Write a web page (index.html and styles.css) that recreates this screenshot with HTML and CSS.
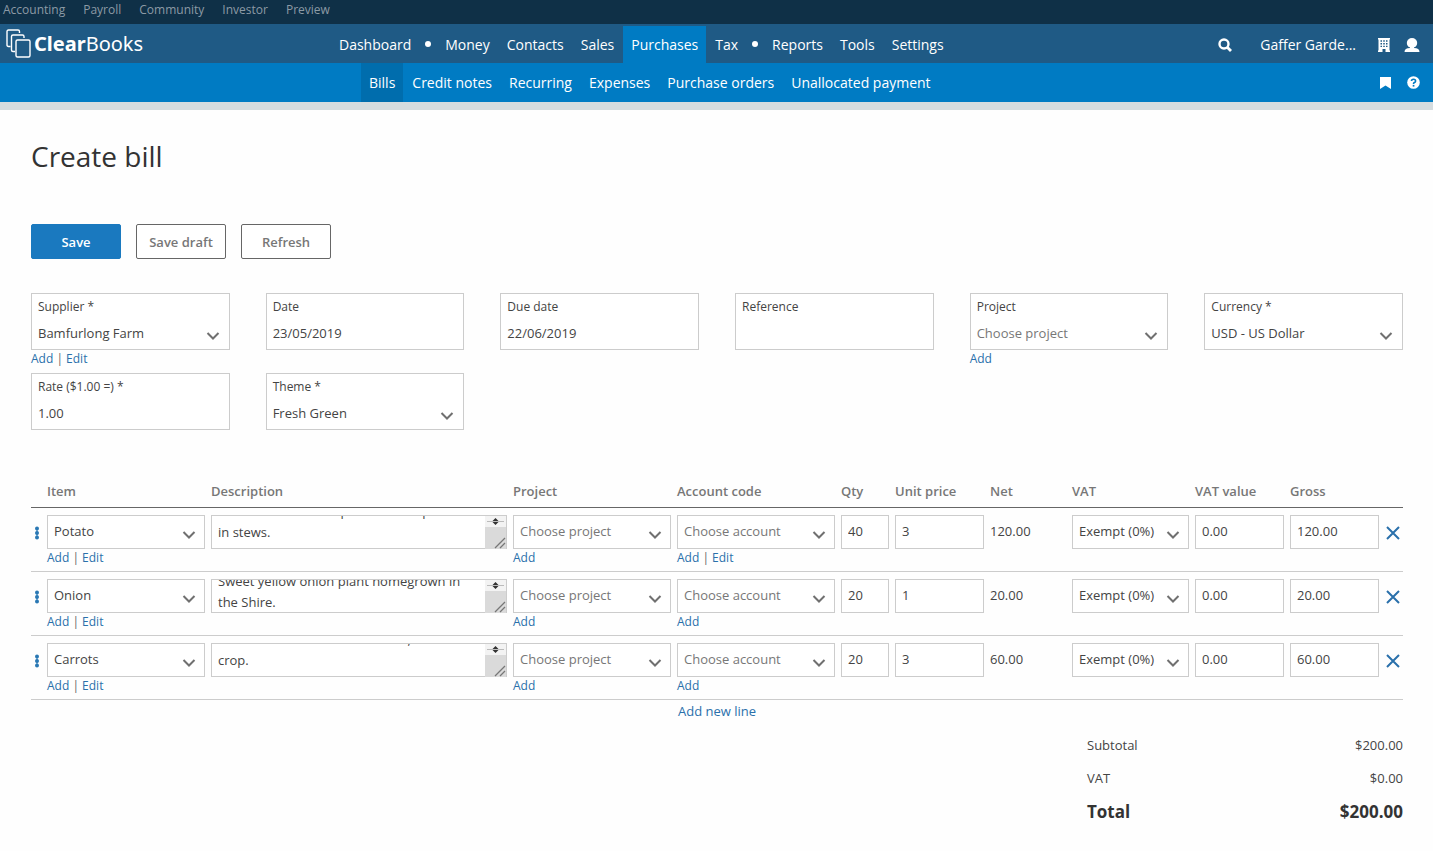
FILE: index.html
```html
<!doctype html>
<html lang="en">
  <head>
    <meta charset="UTF-8" />
    <meta name="viewport" content="width=device-width, initial-scale=1.0" />
    <title>Create bill</title>
    <link rel="stylesheet" href="styles.css">
  </head>
  <body>
    <svg class="sprite" width="0" height="0" aria-hidden="true">
      <symbol id="chevron" viewBox="0 0 14 10">
        <path d="M1.5 2 L7 7.5 L12.5 2" fill="none" stroke="#707070" stroke-width="2" />
      </symbol>
      <symbol id="cross" viewBox="0 0 14 14">
        <path d="M1 1 L13 13 M13 1 L1 13" fill="none" stroke="#2a70ab" stroke-width="2" />
      </symbol>
      <symbol id="handle" viewBox="0 0 6 14">
        <path d="M3 1 V13" stroke="#8db9d8" stroke-width="2" />
        <circle cx="3" cy="2.4" r="2" fill="#2a78b4" />
        <circle cx="3" cy="7" r="2" fill="#2a78b4" />
        <circle cx="3" cy="11.6" r="2" fill="#2a78b4" />
      </symbol>
      <symbol id="grip" viewBox="0 0 21 33">
        <rect width="21" height="33" fill="#fff" />
        <rect width="21" height="11" fill="#f3f3f3" />
        <rect y="11" width="21" height="22" fill="#dadada" />
        <path d="M2 5.500 H19" stroke="#bbb" />
        <path d="M7.500 5 L10.500 2 L13.500 5 Z M7.500 6 L10.500 9 L13.500 6 Z" fill="#333" />
        <path d="M10 32 L20 22 M15 32 L20 27" stroke="#777" stroke-width="1.300" />
      </symbol>
    </svg>

    <nav class="top-bar">
      <a href="#">Accounting</a>
      <a href="#">Payroll</a>
      <a href="#">Community</a>
      <a href="#">Investor</a>
      <a href="#">Preview</a>
    </nav>

    <header class="main-bar">
      <a class="brand" href="#">
        <svg width="25" height="29" viewBox="0 0 25 29" fill="none" stroke="#fff" stroke-width="1.4">
          <path d="M4.500 17.500 H2.500 Q1 17.500 1 16 V2.500 Q1 1 2.500 1 H12 Q13.500 1 13.500 2.500 V4" />
          <path d="M9 22.500 H7 Q5.500 22.500 5.500 21 V7.500 Q5.500 6 7 6 H16.500 Q18 6 18 7.500 V9" />
          <rect x="10" y="11" width="14" height="17" rx="1.500" />
        </svg>
        <span class="brand-name"><b>Clear</b>Books</span>
      </a>
      <nav class="main-nav">
        <a href="#">Dashboard</a>
        <span class="dot"></span>
        <a href="#">Money</a>
        <a href="#">Contacts</a>
        <a href="#">Sales</a>
        <a href="#" class="active">Purchases</a>
        <a href="#">Tax</a>
        <span class="dot"></span>
        <a href="#">Reports</a>
        <a href="#">Tools</a>
        <a href="#">Settings</a>
      </nav>
      <div class="account">
        <a class="search" href="#" aria-label="Search">
          <svg width="14" height="14" viewBox="0 0 14 14" fill="none" stroke="#fff" stroke-width="2.400">
            <circle cx="6" cy="6" r="4.500" />
            <path d="M9 9 L13 13" stroke-width="2.800" />
          </svg>
        </a>
        <a class="company" href="#">Gaffer Garde...</a>
        <a href="#" aria-label="Company">
          <svg width="12" height="14" viewBox="0 0 12 14">
            <path d="M0 0 H12 V1.500 H11.500 V12.500 H12 V14 H7.500 V11 H4.500 V14 H0 V12.500 H.5 V1.500 H0 Z" fill="#fff" />
            <path d="M2.500 3 H4 M5.250 3 H6.750 M8 3 H9.500 M2.500 5.700 H4 M5.250 5.700 H6.750 M8 5.700 H9.500 M2.500 8.400 H4 M5.250 8.400 H6.750 M8 8.400 H9.500" stroke="#1f5a85" stroke-width="1.400" />
          </svg>
        </a>
        <a class="user" href="#" aria-label="User">
          <svg width="16" height="14" viewBox="0 0 16 14" fill="#fff">
            <ellipse cx="8" cy="5" rx="5.200" ry="5" />
            <path d="M6 8 H10 V10 Q15.500 10 15.500 14 H.5 Q.5 10 6 10 Z" />
          </svg>
        </a>
      </div>
    </header>

    <div class="sub-bar">
      <nav class="sub-nav">
        <a href="#" class="active">Bills</a>
        <a href="#">Credit notes</a>
        <a href="#">Recurring</a>
        <a href="#">Expenses</a>
        <a href="#">Purchase orders</a>
        <a href="#">Unallocated payment</a>
      </nav>
      <div class="sub-tools">
        <a href="#" aria-label="Bookmark">
          <svg width="11" height="12" viewBox="0 0 11 12"><path d="M0 0 H11 V12 L5.500 8.500 L0 12 Z" fill="#fff" /></svg>
        </a>
        <a href="#" aria-label="Help">
          <svg width="13" height="13" viewBox="0 0 13 13">
            <circle cx="6.500" cy="6.500" r="6.300" fill="#fff" />
            <path d="M4.500 5 Q4.500 3.200 6.500 3.200 Q8.600 3.200 8.600 4.900 Q8.600 6 7.400 6.500 Q6.500 6.900 6.500 7.900" fill="none" stroke="#007bc3" stroke-width="1.600" />
            <rect x="5.700" y="8.900" width="1.700" height="1.700" fill="#007bc3" />
          </svg>
        </a>
      </div>
    </div>

    <main class="page">
      <h1>Create bill</h1>

      <form>
        <div class="actions">
          <button type="button" class="btn btn-primary">Save</button>
          <button type="button" class="btn">Save draft</button>
          <button type="button" class="btn">Refresh</button>
        </div>

        <div class="fields">
          <div>
            <div class="field">
              <label for="supplier">Supplier *</label>
              <select id="supplier"><option>Bamfurlong Farm</option></select>
              <svg class="chevron"><use href="#chevron" /></svg>
            </div>
            <div class="links"><a href="#">Add</a> | <a href="#">Edit</a></div>
          </div>
          <div>
            <div class="field">
              <label for="date">Date</label>
              <input type="text" id="date" value="23/05/2019" />
            </div>
          </div>
          <div>
            <div class="field">
              <label for="dueDate">Due date</label>
              <input type="text" id="dueDate" value="22/06/2019" />
            </div>
          </div>
          <div>
            <div class="field">
              <label for="reference">Reference</label>
              <input type="text" id="reference" />
            </div>
          </div>
          <div>
            <div class="field">
              <label for="project">Project</label>
              <select id="project" class="empty"><option>Choose project</option></select>
              <svg class="chevron"><use href="#chevron" /></svg>
            </div>
            <div class="links"><a href="#">Add</a></div>
          </div>
          <div>
            <div class="field">
              <label for="currency">Currency *</label>
              <select id="currency"><option>USD - US Dollar</option></select>
              <svg class="chevron"><use href="#chevron" /></svg>
            </div>
          </div>
          <div>
            <div class="field">
              <label for="rate">Rate ($1.00 =) *</label>
              <input type="text" id="rate" value="1.00" />
            </div>
          </div>
          <div>
            <div class="field">
              <label for="theme">Theme *</label>
              <select id="theme"><option>Fresh Green</option></select>
              <svg class="chevron"><use href="#chevron" /></svg>
            </div>
          </div>
        </div>

        <table class="lines">
          <colgroup>
            <col class="col-handle" />
            <col class="col-select" />
            <col />
            <col class="col-select" />
            <col class="col-select" />
            <col class="col-qty" />
            <col class="col-amount" />
            <col class="col-net" />
            <col class="col-vat" />
            <col class="col-amount" />
            <col class="col-amount" />
            <col class="col-remove" />
          </colgroup>
          <thead>
            <tr>
              <th></th>
              <th>Item</th>
              <th>Description</th>
              <th>Project</th>
              <th>Account code</th>
              <th>Qty</th>
              <th>Unit price</th>
              <th>Net</th>
              <th>VAT</th>
              <th>VAT value</th>
              <th>Gross</th>
              <th></th>
            </tr>
          </thead>
          <tbody>
            <tr>
              <td><svg class="handle"><use href="#handle" /></svg></td>
              <td>
                <div class="cell">
                  <select aria-label="Item"><option>Potato</option></select>
                  <svg class="chevron"><use href="#chevron" /></svg>
                </div>
                <div class="links"><a href="#">Add</a> | <a href="#">Edit</a></div>
              </td>
              <td>
                <div class="cell">
                  <textarea aria-label="Description" data-scroll="22">Root and leaf of the plant is to be put
in stews.</textarea>
                  <svg class="grip"><use href="#grip" /></svg>
                </div>
              </td>
              <td>
                <div class="cell">
                  <select aria-label="Project" class="empty"><option>Choose project</option></select>
                  <svg class="chevron"><use href="#chevron" /></svg>
                </div>
                <div class="links"><a href="#">Add</a></div>
              </td>
              <td>
                <div class="cell">
                  <select aria-label="Account code" class="empty"><option>Choose account</option></select>
                  <svg class="chevron"><use href="#chevron" /></svg>
                </div>
                <div class="links"><a href="#">Add</a> | <a href="#">Edit</a></div>
              </td>
              <td><div class="cell"><input type="text" aria-label="Qty" value="40" /></div></td>
              <td><div class="cell"><input type="text" aria-label="Unit price" value="3" /></div></td>
              <td class="net">120.00</td>
              <td>
                <div class="cell">
                  <select aria-label="VAT"><option>Exempt (0%)</option></select>
                  <svg class="chevron"><use href="#chevron" /></svg>
                </div>
              </td>
              <td><div class="cell"><input type="text" aria-label="VAT value" value="0.00" /></div></td>
              <td><div class="cell"><input type="text" aria-label="Gross" value="120.00" /></div></td>
              <td><button type="button" class="remove" aria-label="Remove line"><svg width="14" height="14"><use href="#cross" /></svg></button></td>
            </tr>
            <tr>
              <td><svg class="handle"><use href="#handle" /></svg></td>
              <td>
                <div class="cell">
                  <select aria-label="Item"><option>Onion</option></select>
                  <svg class="chevron"><use href="#chevron" /></svg>
                </div>
                <div class="links"><a href="#">Add</a> | <a href="#">Edit</a></div>
              </td>
              <td>
                <div class="cell">
                  <textarea aria-label="Description" data-scroll="15">Sweet yellow onion plant homegrown in
the Shire.</textarea>
                  <svg class="grip"><use href="#grip" /></svg>
                </div>
              </td>
              <td>
                <div class="cell">
                  <select aria-label="Project" class="empty"><option>Choose project</option></select>
                  <svg class="chevron"><use href="#chevron" /></svg>
                </div>
                <div class="links"><a href="#">Add</a></div>
              </td>
              <td>
                <div class="cell">
                  <select aria-label="Account code" class="empty"><option>Choose account</option></select>
                  <svg class="chevron"><use href="#chevron" /></svg>
                </div>
                <div class="links"><a href="#">Add</a></div>
              </td>
              <td><div class="cell"><input type="text" aria-label="Qty" value="20" /></div></td>
              <td><div class="cell"><input type="text" aria-label="Unit price" value="1" /></div></td>
              <td class="net">20.00</td>
              <td>
                <div class="cell">
                  <select aria-label="VAT"><option>Exempt (0%)</option></select>
                  <svg class="chevron"><use href="#chevron" /></svg>
                </div>
              </td>
              <td><div class="cell"><input type="text" aria-label="VAT value" value="0.00" /></div></td>
              <td><div class="cell"><input type="text" aria-label="Gross" value="20.00" /></div></td>
              <td><button type="button" class="remove" aria-label="Remove line"><svg width="14" height="14"><use href="#cross" /></svg></button></td>
            </tr>
            <tr>
              <td><svg class="handle"><use href="#handle" /></svg></td>
              <td>
                <div class="cell">
                  <select aria-label="Item"><option>Carrots</option></select>
                  <svg class="chevron"><use href="#chevron" /></svg>
                </div>
                <div class="links"><a href="#">Add</a> | <a href="#">Edit</a></div>
              </td>
              <td>
                <div class="cell">
                  <textarea aria-label="Description" data-scroll="22">Crunchie and sweet carrots too, a fine
crop.</textarea>
                  <svg class="grip"><use href="#grip" /></svg>
                </div>
              </td>
              <td>
                <div class="cell">
                  <select aria-label="Project" class="empty"><option>Choose project</option></select>
                  <svg class="chevron"><use href="#chevron" /></svg>
                </div>
                <div class="links"><a href="#">Add</a></div>
              </td>
              <td>
                <div class="cell">
                  <select aria-label="Account code" class="empty"><option>Choose account</option></select>
                  <svg class="chevron"><use href="#chevron" /></svg>
                </div>
                <div class="links"><a href="#">Add</a></div>
              </td>
              <td><div class="cell"><input type="text" aria-label="Qty" value="20" /></div></td>
              <td><div class="cell"><input type="text" aria-label="Unit price" value="3" /></div></td>
              <td class="net">60.00</td>
              <td>
                <div class="cell">
                  <select aria-label="VAT"><option>Exempt (0%)</option></select>
                  <svg class="chevron"><use href="#chevron" /></svg>
                </div>
              </td>
              <td><div class="cell"><input type="text" aria-label="VAT value" value="0.00" /></div></td>
              <td><div class="cell"><input type="text" aria-label="Gross" value="60.00" /></div></td>
              <td><button type="button" class="remove" aria-label="Remove line"><svg width="14" height="14"><use href="#cross" /></svg></button></td>
            </tr>
          </tbody>
        </table>

        <div class="add-line"><a href="#">Add new line</a></div>

        <dl class="totals">
          <div><dt>Subtotal</dt><dd>$200.00</dd></div>
          <div><dt>VAT</dt><dd>$0.00</dd></div>
          <div class="grand"><dt>Total</dt><dd>$200.00</dd></div>
        </dl>
      </form>
    </main>

    <script>
      // open each description near its last line
      document.querySelectorAll('textarea').forEach((el) => {
        el.scrollTop = Number(el.dataset.scroll);
      });
    </script>
  </body>
</html>
```
FILE: styles.css
```css
* {
  box-sizing: border-box;
}
body {
  margin: 0;
  background: #fefefe;
  color: #444;
  font-family: 'Open Sans', 'Noto Sans', sans-serif;
  font-size: 13px;
  line-height: 18px;
}
a {
  color: #2a70ab;
  text-decoration: none;
}
input,
select,
textarea,
button {
  font: inherit;
  color: inherit;
}
.sprite {
  position: absolute;
}

/* header bars */
.top-bar {
  display: flex;
  gap: 18px;
  height: 24px;
  padding: 0 3px;
  background: #0f3047;
  font-size: 12px;
  line-height: 20px;
}
.top-bar a {
  color: #8c9aa5;
}
.main-bar,
.sub-bar {
  display: flex;
  justify-content: space-between;
  font-size: 14px;
  font-weight: 500;
}
.main-bar a,
.sub-bar a {
  color: #fff;
}
.main-bar {
  height: 39px;
  background: #1f5a85;
}
.sub-bar {
  height: 47px;
  background: #007bc3;
  border-bottom: 8px solid #d5dcdf;
}
.brand {
  display: flex;
  flex: 0 0 331px;
  align-items: center;
  gap: 3px;
  padding-left: 6px;
}
.brand-name {
  font-size: 20px;
  font-weight: 400;
  font-family: 'Noto Sans', sans-serif;
}
.main-nav,
.sub-nav {
  display: flex;
  flex: 1;
  gap: 1px;
  line-height: 40px;
}
.main-nav a,
.sub-nav a {
  padding: 0 8px;
  white-space: nowrap;
}
.main-nav {
  padding-top: 2px;
  line-height: 37px;
}
.main-nav .active {
  background: #007bc3;
}
.sub-nav {
  padding-left: 361px;
}
.sub-nav .active {
  background: #006dad;
}
.dot {
  width: 6px;
  height: 6px;
  margin: 15px 5px 0;
  border-radius: 50%;
  background: #fff;
}
.account,
.sub-tools {
  display: flex;
  align-items: center;
  gap: 16px;
  padding-right: 13px;
}
.account {
  padding: 3px 13px 0 0;
  gap: 14px;
}
.account svg,
.sub-tools svg {
  display: block;
}
.company {
  margin: 0 8px 0 14px;
  font-weight: 400;
}

/* page */
.page {
  padding: 26px 30px 20px 31px;
}
h1 {
  margin: 0 0 48px;
  color: #333;
  font-size: 28px;
  font-weight: 400;
  line-height: 40px;
}
.actions {
  display: flex;
  gap: 15px;
  margin-bottom: 34px;
}
.btn {
  width: 90px;
  height: 35px;
  padding: 0;
  background: #fff;
  border: 1px solid #666;
  border-radius: 2px;
  color: #777;
  font-weight: 600;
}
.btn-primary {
  background: #1a79bf;
  border-color: #1a79bf;
  color: #fff;
}
.fields {
  display: grid;
  grid-template-columns: repeat(6, 1fr);
  column-gap: 36px;
  row-gap: 5px;
  margin-bottom: 45px;
}
.field {
  position: relative;
  height: 57px;
  border: 1px solid #ccc;
  background: #fff;
}
.field label {
  display: block;
  padding: 4px 6px 0;
  font-size: 12px;
}
.field input,
.field select {
  display: block;
  width: 100%;
  height: 34px;
  padding: 0 6px;
  border: 0;
  background: none;
  appearance: none;
}
.chevron {
  position: absolute;
  right: 9px;
  bottom: 9px;
  width: 14px;
  height: 10px;
  pointer-events: none;
}
.field .chevron {
  bottom: 8px;
}
.empty {
  color: #777;
}
.links {
  color: #666;
  font-size: 12px;
}

/* bill lines */
.lines {
  width: 100%;
  table-layout: fixed;
  border-collapse: collapse;
}
.col-handle {
  width: 16px;
}
.col-select {
  width: 164px;
}
.col-qty {
  width: 54px;
}
.col-amount {
  width: 95px;
}
.col-net {
  width: 82px;
}
.col-vat {
  width: 123px;
}
.col-remove {
  width: 18px;
}
.lines th {
  height: 32px;
  padding: 0;
  border-bottom: 1px solid #666;
  color: #777;
  font-weight: 600;
  text-align: left;
}
.lines td {
  height: 64px;
  padding: 7px 6px 0 0;
  border-bottom: 1px solid #ccc;
  vertical-align: top;
}
.lines td:first-child,
.lines td:last-child {
  padding-right: 0;
}
.cell {
  position: relative;
  height: 34px;
}
.cell input,
.cell select,
.cell textarea {
  display: block;
  width: 100%;
  height: 34px;
  padding: 0 6px 2px;
  border: 1px solid #ccc;
  border-radius: 0;
  background: #fff;
  appearance: none;
}
.cell textarea {
  padding: 6px 24px 5px 6px;
  line-height: 21px;
  overflow: hidden;
  resize: none;
  white-space: pre;
}
.grip {
  position: absolute;
  top: 1px;
  right: 1px;
  width: 21px;
  height: 33px;
}
.handle {
  display: block;
  width: 6px;
  height: 14px;
  margin: 11px 0 0 3px;
}
.lines .net {
  padding-top: 14px;
}
.remove {
  display: block;
  margin: 11px 0 0 1px;
  padding: 0;
  border: 0;
  background: none;
}
.remove svg {
  display: block;
}
.add-line {
  padding: 2px 0 0 647px;
}

/* totals */
.totals {
  width: 316px;
  margin: 9px 0 0 auto;
  line-height: 33px;
}
.totals div {
  display: flex;
  justify-content: space-between;
}
.totals dd {
  margin: 0;
}
.totals .grand {
  color: #333;
  font-size: 17px;
  font-weight: 700;
}
```
